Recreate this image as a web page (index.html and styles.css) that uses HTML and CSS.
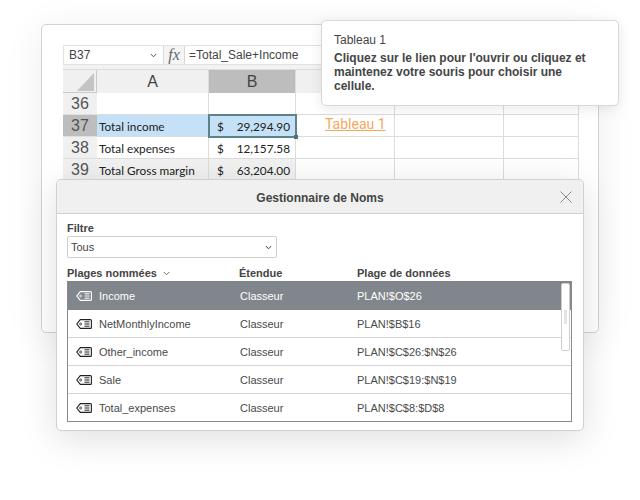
FILE: index.html
```html
<!DOCTYPE html>
<html lang="fr">
<head>
  <meta charset="UTF-8">
  <title>Gestionnaire de Noms</title>
  <link rel="stylesheet" href="styles.css">
</head>
<body>

<svg width="0" height="0" class="defs">
  <symbol id="tag" viewBox="0 0 16 10">
    <path d="M4.3 .6H14.4Q15.4 .6 15.4 1.6V8.4Q15.4 9.4 14.4 9.4H4.3L.8 5Z" fill="none" stroke="currentColor" stroke-width="1.1"/>
    <circle cx="4.6" cy="5" r="1" fill="none" stroke="currentColor" stroke-width=".8"/>
    <path d="M8.5 2.8H13.5M8.5 5H13.5M8.5 7.2H13.5" stroke="currentColor" stroke-width="1"/>
  </symbol>
</svg>

<div class="window back">
  <div class="formula">
    <div class="namebox">B37
      <svg class="chev" width="7" height="5" viewBox="0 0 7 5"><path d="M.8 1 3.5 3.8 6.2 1" fill="none" stroke="#555"/></svg>
    </div>
    <div class="fx">fx</div>
    <div class="expr">=Total_Sale+Income</div>
  </div>

  <div class="sheet">
    <div class="corner"><svg width="33" height="22" viewBox="0 0 33 22"><path d="M31 3V21H14Z" fill="#c4c4c4"/></svg></div>
    <div class="hd">A</div>
    <div class="hd sel">B</div>
    <div class="hd"></div><div class="hd"></div><div class="hd"></div>

    <div class="num">36</div>
    <div class="c"></div><div class="c"></div><div class="c"></div><div class="c"></div><div class="c"></div>

    <div class="num sel">37</div>
    <div class="c blue">Total income</div>
    <div class="c blue money active"><span>$</span><span>29,294.90</span></div>
    <div class="c link"><a>Tableau 1</a></div><div class="c"></div><div class="c"></div>

    <div class="num">38</div>
    <div class="c">Total expenses</div>
    <div class="c money"><span>$</span><span>12,157.58</span></div>
    <div class="c"></div><div class="c"></div><div class="c"></div>

    <div class="num">39</div>
    <div class="c grey">Total Gross margin</div>
    <div class="c grey money"><span>$</span><span>63,204.00</span></div>
    <div class="c"></div><div class="c"></div><div class="c"></div>
  </div>
</div>

<div class="window tip">
  <p class="tip-title">Tableau 1</p>
  <p class="tip-text">Cliquez sur le lien pour l'ouvrir ou cliquez et maintenez votre souris pour choisir une cellule.</p>
</div>

<div class="window dialog">
  <div class="dlg-head">
    Gestionnaire de Noms
    <svg class="close" width="12" height="12" viewBox="0 0 12 12"><path d="M.5 .5 11.5 11.5M11.5 .5 .5 11.5" stroke="#8a8a8a" stroke-width="1"/></svg>
  </div>
  <div class="dlg-body">
    <div class="lbl">Filtre</div>
    <div class="select">Tous
      <svg width="7" height="5" viewBox="0 0 7 5"><path d="M.8 1 3.5 3.8 6.2 1" fill="none" stroke="#444"/></svg>
    </div>

    <div class="cols lbl">
      <div>Plages nommées <svg class="sort" width="7" height="5" viewBox="0 0 7 5"><path d="M.8 1 3.5 3.8 6.2 1" fill="none" stroke="#777"/></svg></div>
      <div>Étendue</div>
      <div>Plage de données</div>
    </div>

    <div class="list">
      <div class="row on">
        <div class="name"><svg width="16" height="10"><use href="#tag"/></svg>Income</div><div>Classeur</div><div>PLAN!$O$26</div>
      </div>
      <div class="row">
        <div class="name"><svg width="16" height="10"><use href="#tag"/></svg>NetMonthlyIncome</div><div>Classeur</div><div>PLAN!$B$16</div>
      </div>
      <div class="row">
        <div class="name"><svg width="16" height="10"><use href="#tag"/></svg>Other_income</div><div>Classeur</div><div>PLAN!$C$26:$N$26</div>
      </div>
      <div class="row">
        <div class="name"><svg width="16" height="10"><use href="#tag"/></svg>Sale</div><div>Classeur</div><div>PLAN!$C$19:$N$19</div>
      </div>
      <div class="row">
        <div class="name"><svg width="16" height="10"><use href="#tag"/></svg>Total_expenses</div><div>Classeur</div><div>PLAN!$C$8:$D$8</div>
      </div>
      <div class="scrollbar"><div class="thumb"></div></div>
    </div>
  </div>
</div>

</body>
</html>
```

FILE: styles.css
```css
html, body { margin: 0; height: 100%; overflow: hidden; background: #fff; }
body { font-family: "Liberation Sans", Arial, sans-serif; color: #444; }
.defs { position: absolute; }

.window { position: absolute; box-sizing: border-box; background: #fff; border: 1px solid #d2d2d2; border-radius: 5px; }

/* spreadsheet behind */
.back { left: 41px; top: 24px; width: 558px; height: 309px; padding: 20px 19px 0 21px; box-shadow: 0 5px 40px rgba(0,0,0,.07); }
.formula { display: flex; height: 20px; font-size: 12px; color: #444; border: 1px solid #e2e2e2; box-sizing: border-box; box-shadow: 0 4px 0 #f3f3f3; }
.namebox { width: 100px; box-sizing: border-box; padding: 0 5px; display: flex; justify-content: space-between; align-items: center; border-right: 1px solid #d8d8d8; }
.chev { margin-right: 1px; }
.fx { width: 21px; box-sizing: border-box; text-align: center; font: italic 16px/17px "Liberation Serif", serif; color: #666; background: #f4f4f4; border-right: 1px solid #d8d8d8; }
.expr { padding-left: 4px; line-height: 18px; }

.sheet { display: grid; grid-template-columns: 34px 112px 87px 99px 109px 75px; grid-template-rows: 23px repeat(4, 22px); margin-top: 4px; border-top: 1px solid #dcdcdc; font-family: "Lato", sans-serif; }
.corner { background: #f0f0f0; border-right: 1px solid #c9c9c9; border-bottom: 1px solid #c9c9c9; box-sizing: border-box; }
.corner svg { display: block; }
.hd { background: #f0f0f0; border-right: 1px solid #dcdcdc; box-sizing: border-box; font: 16px/23px "Liberation Sans", sans-serif; color: #444; text-align: center; }
.hd.sel { background: #bdbdbd; }
.num { background: #f0f0f0; box-sizing: border-box; border-bottom: 1px solid #e0e0e0; font: 16px/22px "Liberation Sans", sans-serif; color: #555; text-align: center; }
.num.sel { background: #bdbdbd; }
.c { box-sizing: border-box; border-right: 1px solid #dcdcdc; border-bottom: 1px solid #dcdcdc; font-size: 11.8px; line-height: 24px; color: #222; padding-left: 2px; white-space: nowrap; overflow: hidden; }
.blue { background: #c5e1f7; }
.grey { background: #f1f1f1; }
.money { display: flex; justify-content: space-between; padding: 0 5px 0 8px; }
.active { position: relative; overflow: visible; outline: 2px solid #5b8388; outline-offset: -1px; border: 0; padding-right: 6px; }
.active::after { content: ""; position: absolute; right: -2px; bottom: -2px; width: 4px; height: 4px; background: #4d7276; }
.link { font: 14px/19px "Roboto", "Liberation Sans", sans-serif; padding-left: 29px; }
.link a { color: #f6a75c; text-decoration: underline; }

/* tooltip */
.tip { left: 321px; top: 20px; width: 298px; height: 86px; padding: 12px 12px 0; border-color: #d8d8d8; box-shadow: 0 3px 14px rgba(0,0,0,.09); }
.tip p { margin: 0; }
.tip-title { font-size: 12px; line-height: 14px; color: #444; margin-bottom: 4px !important; }
.tip-text { font-size: 12px; line-height: 14px; font-weight: bold; }

/* dialog */
.dialog { left: 56px; top: 179px; width: 528px; height: 252px; border-color: #d0d0d0; box-shadow: 0 8px 36px rgba(0,0,0,.13); }
.dlg-head { position: relative; height: 34px; box-sizing: border-box; background: #f0f0f0; border-bottom: 1px solid #cfcfcf; border-radius: 5px 5px 0 0; text-align: center; font-size: 12px; font-weight: bold; line-height: 36px; color: #444; }
.close { position: absolute; right: 11px; top: 11px; }
.dlg-body { padding: 7px 11px 0 10px; }
.lbl { font-size: 11px; font-weight: bold; line-height: 14px; color: #444; }
.select { margin-top: 1px; width: 210px; height: 22px; box-sizing: border-box; border: 1px solid #cfcfcf; border-radius: 2px; padding: 0 4px 0 3px; font-size: 11px; display: flex; justify-content: space-between; align-items: center; }
.cols { display: grid; grid-template-columns: 172px 118px 1fr; margin-top: 8px; height: 15px; }
.sort { margin: 0 0 1px 3px; }

.list { position: relative; width: 505px; box-sizing: border-box; border: 1px solid #8a8a8a; border-top: 0; font-size: 11px; color: #4a4a4a; }
.row { display: grid; grid-template-columns: 172px 117px 1fr; align-items: center; height: 28px; box-sizing: border-box; border-bottom: 1px solid #d4d4d4; }
.row:nth-last-child(2) { border-bottom: 0; height: 27px; }
.row.on { height: 29px; background: #80868b; color: #fff; border-bottom: 0; }
.name { display: flex; align-items: center; gap: 7px; padding-left: 8px; }
.name svg { color: #222; flex: none; }
.row.on .name svg { color: #fff; }

.scrollbar { position: absolute; right: 1px; top: 2px; width: 9px; height: 68px; box-sizing: border-box; background: #fff; border: 1px solid #cfcfcf; border-radius: 2px; }
.thumb { margin: 26px auto 0; width: 3px; height: 14px; background: #e4e4e4; }
```
